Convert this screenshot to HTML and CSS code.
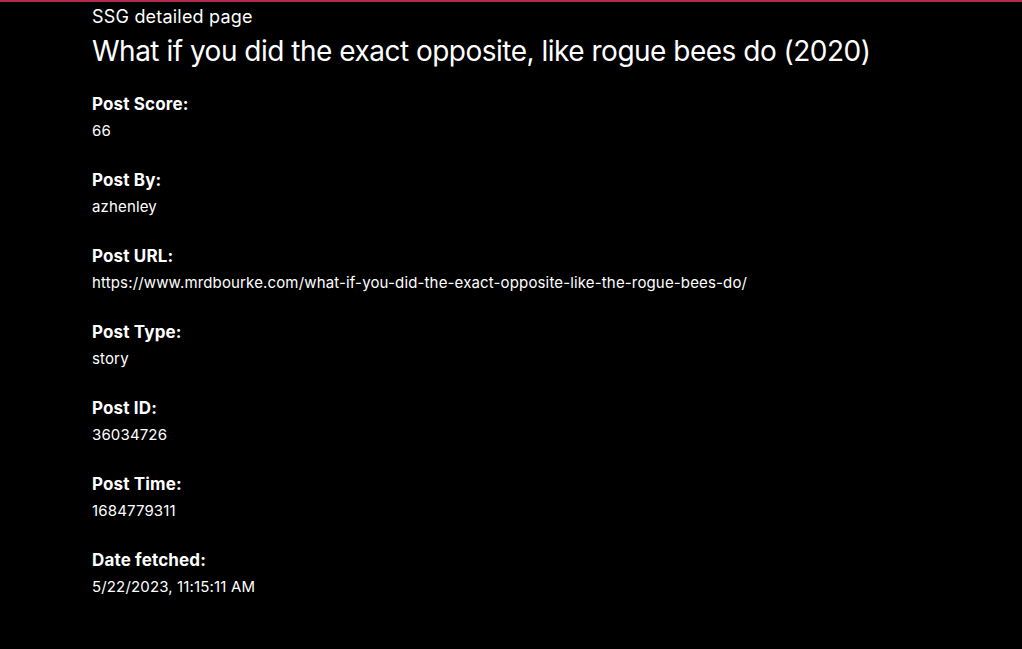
FILE: index.html
```html
<!DOCTYPE html>
<html lang="en">
<head>
<meta charset="utf-8">
<title>SSG detailed page</title>
<link rel="stylesheet" href="styles.css">
</head>
<body>
<main class="page">
  <p class="subtitle">SSG detailed page</p>
  <h1 class="title">What if you did the exact opposite, like rogue bees do (2020)</h1>
  <dl class="fields">
    <div class="field"><dt>Post Score:</dt><dd>66</dd></div>
    <div class="field"><dt>Post By:</dt><dd>azhenley</dd></div>
    <div class="field"><dt>Post URL:</dt><dd>https://www.mrdbourke.com/what-if-you-did-the-exact-opposite-like-the-rogue-bees-do/</dd></div>
    <div class="field"><dt>Post Type:</dt><dd>story</dd></div>
    <div class="field"><dt>Post ID:</dt><dd>36034726</dd></div>
    <div class="field"><dt>Post Time:</dt><dd>1684779311</dd></div>
    <div class="field"><dt>Date fetched:</dt><dd>5/22/2023, 11:15:11 AM</dd></div>
  </dl>
</main>
</body>
</html>
```
FILE: styles.css
```css
html, body {
  margin: 0;
  padding: 0;
  background: #000;
  color: #fff;
  font-family: Inter, "Liberation Sans", sans-serif;
}
body {
  border-top: 2px solid #b02a52;
  min-height: 647px;
}
.page {
  padding: 4px 0 0 92px;
}
.subtitle {
  margin: 0;
  font-size: 18px;
  line-height: 22px;
  letter-spacing: 0.2px;
}
.title {
  margin: 6px 0 0;
  font-size: 28px;
  font-weight: 400;
  line-height: 34px;
  letter-spacing: -0.5px;
}
.fields {
  margin: 24px 0 0;
  display: flex;
  flex-direction: column;
  gap: 27px;
}
.field dt {
  font-weight: 700;
  font-size: 17px;
  line-height: 24px;
  letter-spacing: 0.15px;
}
.field dd {
  margin: 4px 0 0;
  font-size: 15px;
  line-height: 21px;
  letter-spacing: 0.15px;
}
```
